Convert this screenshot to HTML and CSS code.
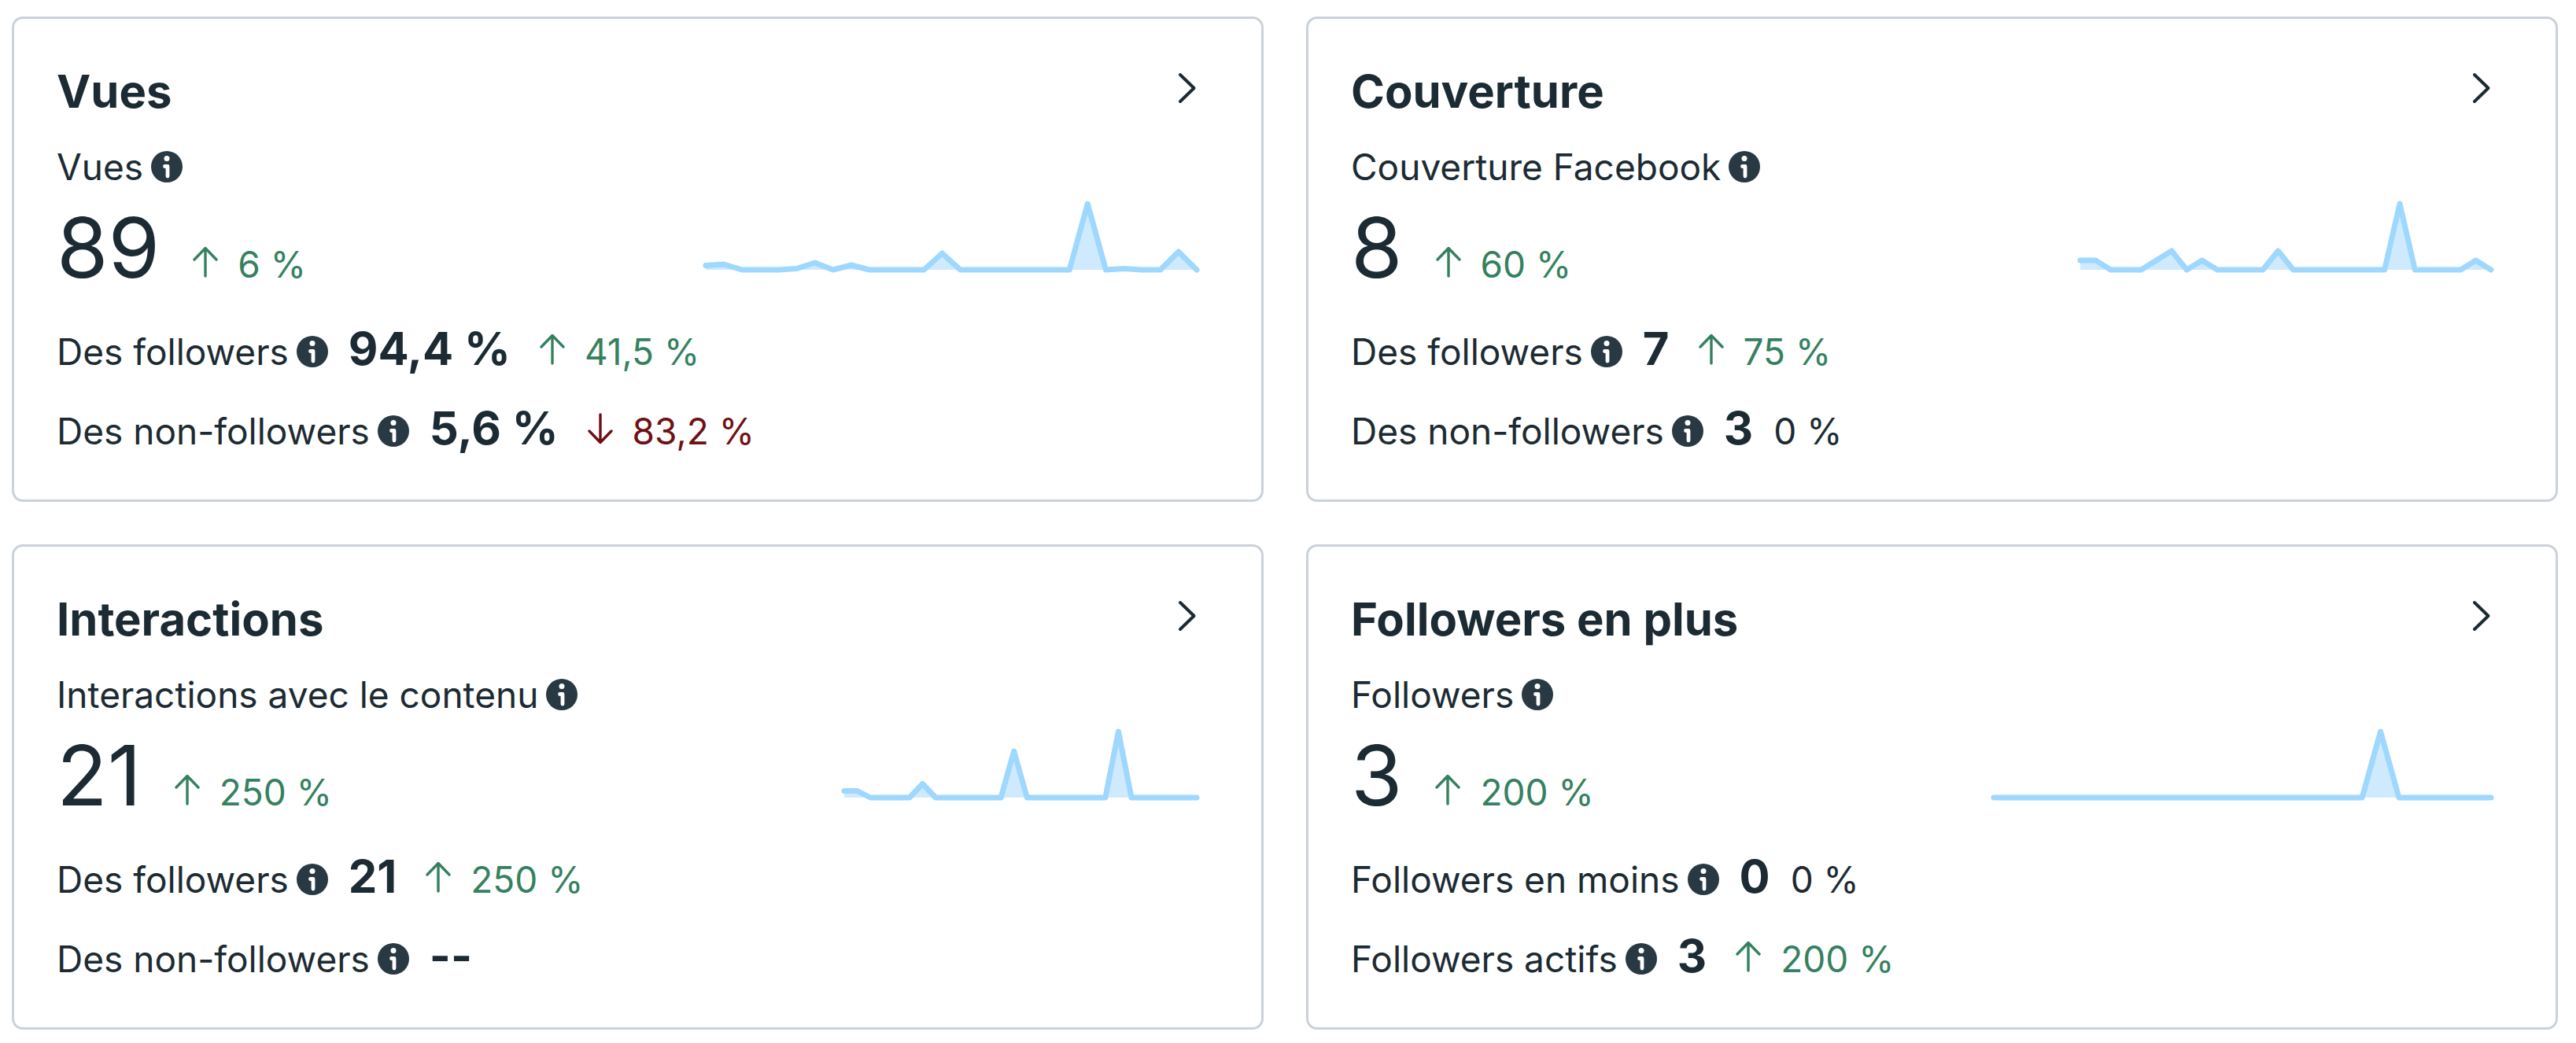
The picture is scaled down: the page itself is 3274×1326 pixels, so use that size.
FILE: index.html
```html
<!DOCTYPE html>
<html lang="fr">
<head>
<meta charset="utf-8">
<meta name="viewport" content="width=device-width, initial-scale=1">
<title>Statistiques</title>
<link rel="stylesheet" href="styles.css">
</head>
<body>
<svg class="sprite" aria-hidden="true">
  <symbol id="info" viewBox="0 0 40 40">
    <circle cx="20" cy="20" r="20" fill="currentColor"/>
    <circle cx="20" cy="9.500" r="3.500" fill="#fff"/>
    <path d="M17.500 19.500H21V32" fill="none" stroke="#fff" stroke-width="4.800" stroke-linecap="round" stroke-linejoin="round"/>
  </symbol>
  <symbol id="up" viewBox="0 0 32 40">
    <path d="M16 38V3M2 17L16 2.500L30 17" fill="none" stroke="currentColor" stroke-width="3.400" stroke-linecap="round" stroke-linejoin="round"/>
  </symbol>
  <symbol id="down" viewBox="0 0 32 40">
    <path d="M16 2V37M2 23L16 37.500L30 23" fill="none" stroke="currentColor" stroke-width="3.400" stroke-linecap="round" stroke-linejoin="round"/>
  </symbol>
  <symbol id="chevron" viewBox="0 0 24 40">
    <path d="M3 3L20.500 20L3 37" fill="none" stroke="currentColor" stroke-width="4" stroke-linecap="round" stroke-linejoin="round"/>
  </symbol>
</svg>

<main class="cards">
  <section class="card">
    <header class="card-header">
      <h2 class="title">Vues</h2>
      <a class="open" href="#vues" aria-label="Ouvrir Vues"><svg width="24" height="40"><use href="#chevron"/></svg></a>
    </header>
    <div class="summary">
      <div class="metric">
        <div class="label">Vues <button class="info" type="button" aria-label="À propos des vues"><svg width="40" height="40"><use href="#info"/></svg></button></div>
        <div class="figure"><span class="total">89</span><span class="delta up"><svg class="arrow" width="32" height="40"><use href="#up"/></svg>6 %</span></div>
      </div>
      <svg class="chart" width="632" height="92" viewBox="0 0 632 92" data-values="5.5 7 0 0 0 1.5 9 0 6 0 0 0 0 21 0 0 0 0 0 0 0 84 0 1.5 0 0 23 0"></svg>
    </div>
    <div class="rows">
      <div class="row"><span class="label">Des followers <button class="info" type="button" aria-label="À propos des followers"><svg width="40" height="40"><use href="#info"/></svg></button></span><strong class="value">94,4 %</strong><span class="delta up"><svg class="arrow" width="32" height="40"><use href="#up"/></svg>41,5 %</span></div>
      <div class="row"><span class="label">Des non-followers <button class="info" type="button" aria-label="À propos des non-followers"><svg width="40" height="40"><use href="#info"/></svg></button></span><strong class="value">5,6 %</strong><span class="delta down"><svg class="arrow" width="32" height="40"><use href="#down"/></svg>83,2 %</span></div>
    </div>
  </section>

  <section class="card">
    <header class="card-header">
      <h2 class="title">Couverture</h2>
      <a class="open" href="#couverture" aria-label="Ouvrir Couverture"><svg width="24" height="40"><use href="#chevron"/></svg></a>
    </header>
    <div class="summary">
      <div class="metric">
        <div class="label">Couverture Facebook <button class="info" type="button" aria-label="À propos de la couverture"><svg width="40" height="40"><use href="#info"/></svg></button></div>
        <div class="figure"><span class="total">8</span><span class="delta up"><svg class="arrow" width="32" height="40"><use href="#up"/></svg>60 %</span></div>
      </div>
      <svg class="chart" width="530" height="92" viewBox="0 0 530 92" data-values="12 12 0 0 0 12 24 0 12 0 0 0 0 24 0 0 0 0 0 0 0 84 0 0 0 0 12 0"></svg>
    </div>
    <div class="rows">
      <div class="row"><span class="label">Des followers <button class="info" type="button" aria-label="À propos des followers"><svg width="40" height="40"><use href="#info"/></svg></button></span><strong class="value">7</strong><span class="delta up"><svg class="arrow" width="32" height="40"><use href="#up"/></svg>75 %</span></div>
      <div class="row"><span class="label">Des non-followers <button class="info" type="button" aria-label="À propos des non-followers"><svg width="40" height="40"><use href="#info"/></svg></button></span><strong class="value">3</strong><span class="delta">0 %</span></div>
    </div>
  </section>

  <section class="card">
    <header class="card-header">
      <h2 class="title">Interactions</h2>
      <a class="open" href="#interactions" aria-label="Ouvrir Interactions"><svg width="24" height="40"><use href="#chevron"/></svg></a>
    </header>
    <div class="summary">
      <div class="metric">
        <div class="label">Interactions avec le contenu <button class="info" type="button" aria-label="À propos des interactions"><svg width="40" height="40"><use href="#info"/></svg></button></div>
        <div class="figure"><span class="total">21</span><span class="delta up"><svg class="arrow" width="32" height="40"><use href="#up"/></svg>250 %</span></div>
      </div>
      <svg class="chart" width="456" height="92" viewBox="0 0 456 92" data-values="8.4 8.4 0 0 0 0 17.5 0 0 0 0 0 0 59 0 0 0 0 0 0 0 84 0 0 0 0 0 0"></svg>
    </div>
    <div class="rows">
      <div class="row"><span class="label">Des followers <button class="info" type="button" aria-label="À propos des followers"><svg width="40" height="40"><use href="#info"/></svg></button></span><strong class="value">21</strong><span class="delta up"><svg class="arrow" width="32" height="40"><use href="#up"/></svg>250 %</span></div>
      <div class="row"><span class="label">Des non-followers <button class="info" type="button" aria-label="À propos des non-followers"><svg width="40" height="40"><use href="#info"/></svg></button></span><strong class="value">--</strong></div>
    </div>
  </section>

  <section class="card">
    <header class="card-header">
      <h2 class="title">Followers en plus</h2>
      <a class="open" href="#followers" aria-label="Ouvrir Followers en plus"><svg width="24" height="40"><use href="#chevron"/></svg></a>
    </header>
    <div class="summary">
      <div class="metric">
        <div class="label">Followers <button class="info" type="button" aria-label="À propos des followers"><svg width="40" height="40"><use href="#info"/></svg></button></div>
        <div class="figure"><span class="total">3</span><span class="delta up"><svg class="arrow" width="32" height="40"><use href="#up"/></svg>200 %</span></div>
      </div>
      <svg class="chart" width="640" height="92" viewBox="0 0 640 92" data-values="0 0 0 0 0 0 0 0 0 0 0 0 0 0 0 0 0 0 0 0 0 84 0 0 0 0 0 0"></svg>
    </div>
    <div class="rows">
      <div class="row"><span class="label">Followers en moins <button class="info" type="button" aria-label="À propos des followers en moins"><svg width="40" height="40"><use href="#info"/></svg></button></span><strong class="value">0</strong><span class="delta">0 %</span></div>
      <div class="row"><span class="label">Followers actifs <button class="info" type="button" aria-label="À propos des followers actifs"><svg width="40" height="40"><use href="#info"/></svg></button></span><strong class="value">3</strong><span class="delta up"><svg class="arrow" width="32" height="40"><use href="#up"/></svg>200 %</span></div>
    </div>
  </section>
</main>
<script src="charts.js"></script>
</body>
</html>
```
FILE: charts.js
```js
// Draws each sparkline from its list of daily values.
const BASE = 88;
const INSET = 4;

for (const chart of document.querySelectorAll('.chart')) {
  const values = chart.dataset.values.split(' ').map(Number);
  const width = chart.viewBox.baseVal.width;
  const step = (width - 2 * INSET) / (values.length - 1);
  const points = values.map((v, i) => `${INSET + i * step},${BASE - v}`);
  const add = (name, className, pts) => {
    const shape = document.createElementNS('http://www.w3.org/2000/svg', name);
    shape.setAttribute('class', className);
    shape.setAttribute('points', pts.join(' '));
    chart.append(shape);
  };
  add('polygon', 'area', [`${INSET},${BASE}`, ...points, `${width - INSET},${BASE}`]);
  add('polyline', 'line', points);
}
```
FILE: styles.css
```css
* {
  box-sizing: border-box;
}

body {
  margin: 0;
  background: #fff;
  color: #1c2b33;
  font-family: Inter, "Liberation Sans", sans-serif;
}

.sprite {
  display: none;
}

.cards {
  display: grid;
  grid-template-columns: 1fr 1fr;
  gap: 54px;
  padding: 21px 23px 16px 15px;
}

.card {
  padding: 56px 78px 57px 54px;
  border: 3px solid #cbd2d9;
  border-radius: 14px;
  background: #fff;
}

.card-header {
  display: flex;
  justify-content: space-between;
  margin-bottom: 30px;
}

.title {
  margin: 0;
  font-size: 58px;
  font-weight: 700;
  line-height: 72px;
}

.open {
  display: flex;
  align-items: center;
  height: 64px;
  padding-right: 4px;
  color: inherit;
}

.summary {
  display: flex;
  justify-content: space-between;
  align-items: flex-end;
  margin-bottom: 44px;
}

.label {
  display: inline-flex;
  align-items: center;
  gap: 10px;
  font-size: 46px;
  line-height: 60px;
}

.info {
  display: flex;
  padding: 0;
  border: 0;
  background: none;
  color: #283943;
}

.figure,
.row {
  display: flex;
  align-items: baseline;
  gap: 26px;
}

.figure {
  gap: 31px;
  margin-top: 15px;
}

.total {
  font-size: 106px;
  line-height: 116px;
}

.chart {
  flex: none;
  margin-bottom: 26px;
}

.area {
  fill: #cfeafd;
}

.line {
  fill: none;
  stroke: #9ed8fe;
  stroke-width: 7px;
  stroke-linecap: round;
  stroke-linejoin: round;
}

.rows {
  display: flex;
  flex-direction: column;
  gap: 41px;
}

.value {
  font-size: 58px;
  font-weight: 700;
  line-height: 52px;
}

.delta {
  display: inline-flex;
  align-items: baseline;
  gap: 25px;
  font-size: 46px;
  line-height: 60px;
}

.arrow {
  margin-left: 11px;
}

.up {
  color: #35815f;
}

.down {
  color: #6f1014;
}
```
